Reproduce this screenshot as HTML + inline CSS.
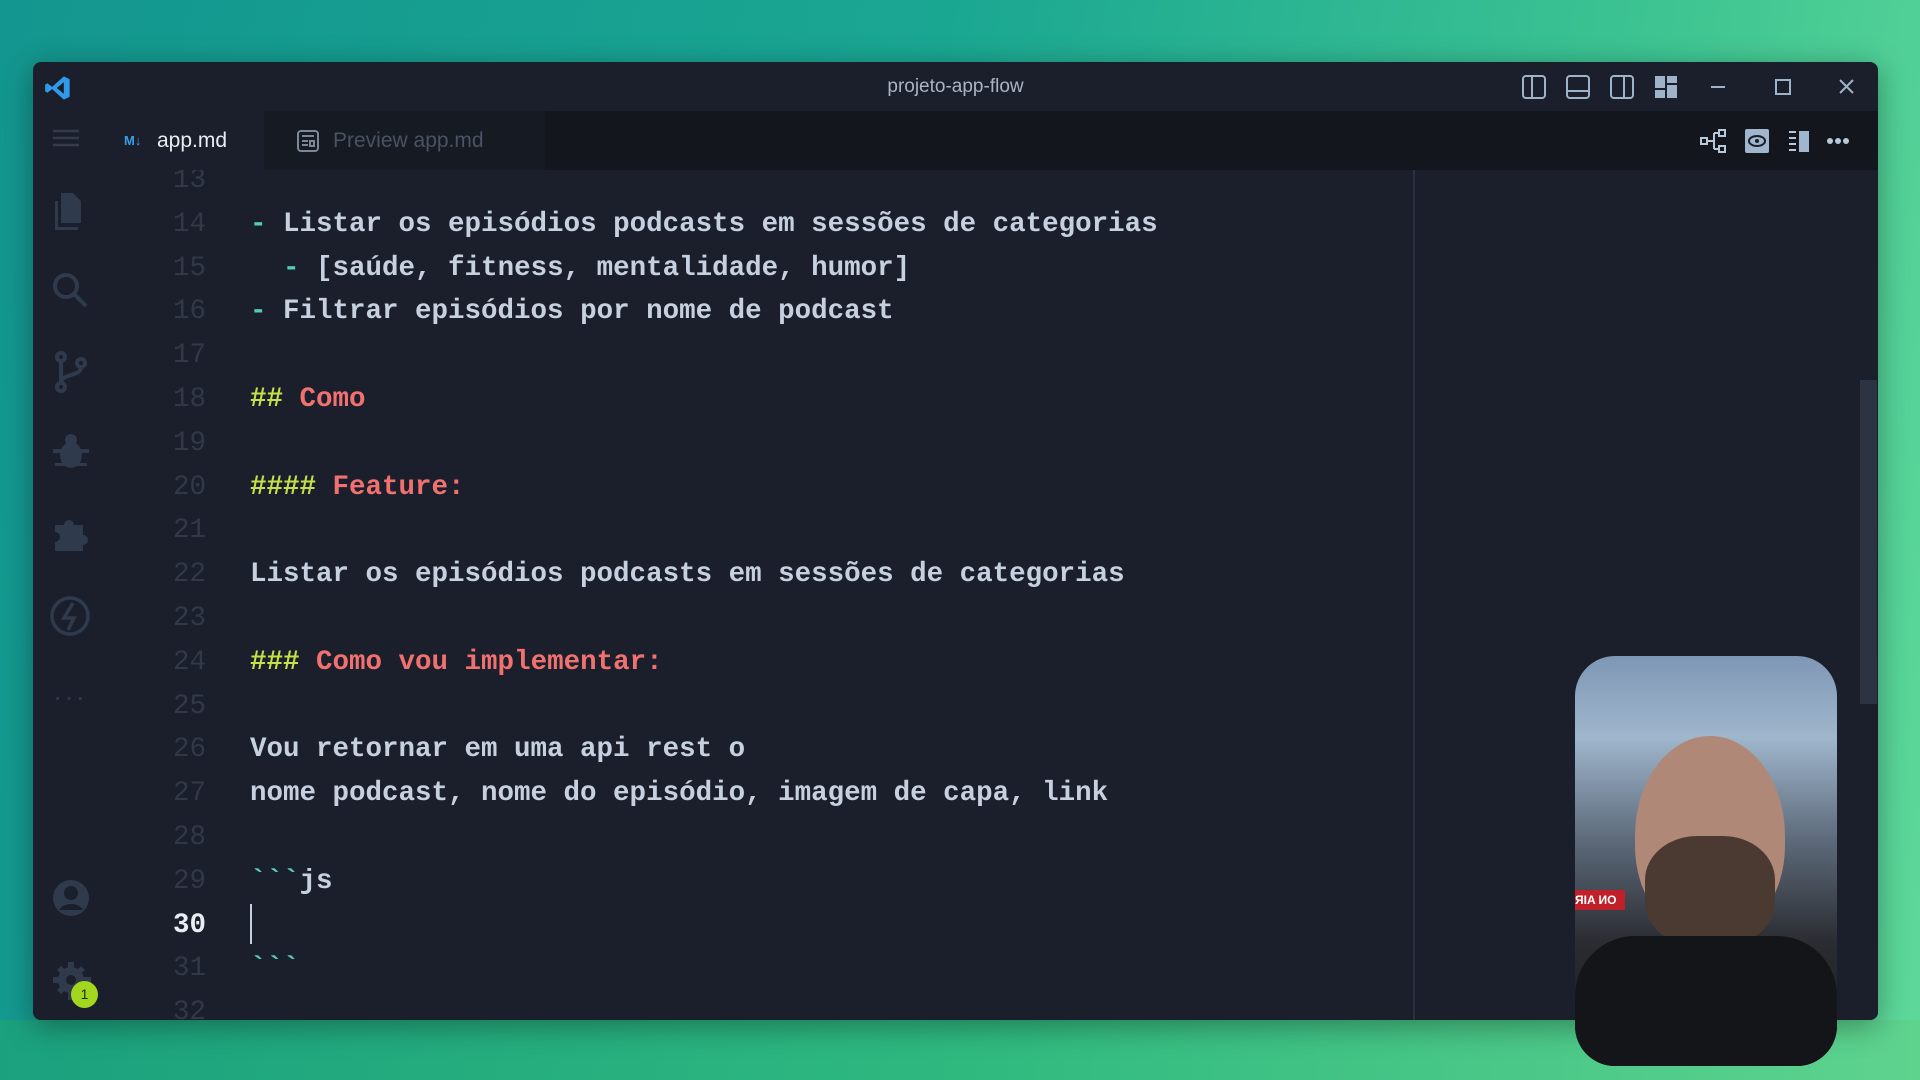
<!DOCTYPE html>
<html><head><meta charset="utf-8"><style>
*{margin:0;padding:0;box-sizing:border-box}
body{width:1920px;height:1080px;overflow:hidden;background:linear-gradient(100deg,#13968f 0%,#1aa792 45%,#3fc592 80%,#5fd99a 100%);font-family:"Liberation Sans",sans-serif;position:relative}
.bot{position:absolute;left:0;top:1020px;width:1920px;height:60px;background:linear-gradient(90deg,#1ba17e,#2fb97f 50%,#5ed38e)}
.win{position:absolute;left:33px;top:62px;width:1845px;height:958px;background:#1b1f2b;border-radius:8px;overflow:hidden;box-shadow:0 6px 30px rgba(0,0,0,.35)}
.title{position:absolute;left:0;top:0;width:100%;height:49px;color:#aab4c2;font-size:19px;text-align:center;line-height:49px}
.tabs{position:absolute;left:81px;top:49px;width:1764px;height:59px;background:#161a22}
.tab1{position:absolute;left:0;top:0;width:150px;height:59px;background:#1b1f2b}
.tabtxt{position:absolute;top:0;line-height:59px;font-size:21px}
.act{position:absolute;left:0;top:49px;width:81px;height:909px;background:#1b1f2b}
.ed{position:absolute;left:81px;top:108px;width:1764px;height:850px;overflow:hidden;background:#1b1f2b}
.code{position:absolute;left:0;top:-11px;font-family:"Liberation Mono",monospace;font-size:27.5px;font-weight:bold;line-height:43.8px;white-space:pre}
.ln{position:absolute;left:0;width:92px;text-align:right;color:#313846;font-weight:normal}
.tx{position:absolute;left:136px;color:#c6d0de}
.h{color:#c6e04a}.r{color:#f0716f}.d{color:#53cbb6}
svg{position:absolute}
.cam{position:absolute;left:1575px;top:656px;width:262px;height:410px;border-radius:40px;overflow:hidden;background:linear-gradient(180deg,#7e97b5 0%,#9fb6cc 20%,#5d6a7a 45%,#2a2c31 70%,#18191c 100%)}
</style></head><body>
<div class="bot"></div>
<div class="win">
 <div class="title">projeto-app-flow</div>
 <svg style="left:11px;top:12px" width="28" height="28" viewBox="0 0 24 24"><path d="M17 2l5 2.5v15L17 22 7 13l-4 3-2-1V9l2-1 4 3L17 2zm0 5l-6 5 6 5z" fill="#2f9be8"/></svg>
 <svg style="left:1488px;top:10px" width="340" height="30" viewBox="0 0 340 30" fill="none" stroke="#9fb3c8" stroke-width="2">
  <rect x="2" y="4" width="22" height="22" rx="3"/><line x1="11" y1="4" x2="11" y2="26"/>
  <rect x="46" y="4" width="22" height="22" rx="3"/><line x1="46" y1="19" x2="68" y2="19"/>
  <rect x="90" y="4" width="22" height="22" rx="3"/><line x1="103" y1="4" x2="103" y2="26"/>
  <g fill="#9fb3c8" stroke="none"><rect x="134" y="4" width="10" height="12"/><rect x="146" y="4" width="10" height="7"/><rect x="134" y="18" width="10" height="8"/><rect x="146" y="13" width="10" height="13"/></g>
  <line x1="190" y1="15" x2="204" y2="15"/><rect x="255" y="8" width="14" height="14"/>
  <path d="M319 8l13 13M332 8l-13 13"/>
 </svg>
 <div class="act">
  <svg style="left:18px;top:12px" width="30" height="30" viewBox="0 0 30 30" stroke="#343c4b" stroke-width="2.5"><path d="M2 8h26M2 15h26M2 22h26"/></svg>
  <svg style="left:20px;top:80px" width="30" height="40" viewBox="0 0 30 40" fill="#2f3a4c"><path d="M8 2h12l8 8v22H8z"/><path d="M2 10h3v26h20v3H2z"/></svg>
  <svg style="left:18px;top:160px" width="40" height="40" viewBox="0 0 40 40" fill="none" stroke="#2f3a4c" stroke-width="4"><circle cx="15" cy="15" r="11"/><path d="M23 23l12 12"/></svg>
  <svg style="left:20px;top:240px" width="36" height="42" viewBox="0 0 36 42" fill="none" stroke="#2f3a4c" stroke-width="4"><circle cx="8" cy="6" r="4"/><circle cx="8" cy="36" r="4"/><circle cx="28" cy="12" r="4"/><path d="M8 10v22M28 16c0 10-20 6-20 16"/></svg>
  <svg style="left:18px;top:320px" width="40" height="40" viewBox="0 0 40 40" fill="#2f3a4c"><ellipse cx="20" cy="24" rx="11" ry="13"/><circle cx="20" cy="9" r="6"/><path d="M2 18h36v4H2zM4 32h32v3H4z"/></svg>
  <svg style="left:18px;top:402px" width="40" height="40" viewBox="0 0 40 40" fill="#2f3a4c"><path d="M4 12h9a5 5 0 0110 0h9v10a5 5 0 010 10v6H4v-9a5 5 0 000-10z"/></svg>
  <svg style="left:16px;top:484px" width="42" height="42" viewBox="0 0 42 42" fill="none" stroke="#2f3a4c" stroke-width="3.5"><circle cx="21" cy="21" r="18"/><path d="M24 8l-9 15h10l-6 12" /></svg>
  <div style="position:absolute;left:20px;top:570px;color:#2f3a4c;font-size:28px;letter-spacing:2px">···</div>
  <svg style="left:18px;top:767px" width="40" height="40" viewBox="0 0 40 40" fill="#2f3a4c"><circle cx="20" cy="20" r="18"/><circle cx="20" cy="15" r="7" fill="#1b1f2b"/><path d="M8 32c4-8 20-8 24 0" fill="#1b1f2b"/></svg>
  <svg style="left:18px;top:849px" width="40" height="40" viewBox="0 0 40 40" fill="#2f3a4c"><circle cx="20" cy="20" r="13"/><path d="M17 2h6v38h-6zM2 17h38v6H2z"/><path d="M6 10l4-4 24 24-4 4zM30 6l4 4-24 24-4-4z"/><circle cx="20" cy="20" r="5" fill="#1b1f2b"/></svg>
  <div style="position:absolute;left:38px;top:870px;width:27px;height:27px;border-radius:50%;background:#a3d61e;color:#1b2b10;font-size:14px;text-align:center;line-height:27px">1</div>
 </div>
 <div class="tabs">
  <div class="tab1"></div>
  <div class="tabtxt" style="left:10px;color:#3b9ee8;font-size:13px;font-weight:bold">M↓</div>
  <div class="tabtxt" style="left:43px;color:#e8edf3">app.md</div>
  <svg style="left:183px;top:19px" width="22" height="22" viewBox="0 0 22 22" fill="none" stroke="#7c8797" stroke-width="2"><rect x="1" y="1" width="20" height="20" rx="3"/><path d="M5 6h12M5 11h6M5 15h6M13 11h4v5h-4z"/></svg>
  <div class="tabtxt" style="left:219px;color:#4a5363">Preview app.md</div>
  <div style="position:absolute;left:431px;top:0;width:1333px;height:59px;background:#13161d"></div>
  <svg style="left:1586px;top:16px" width="150" height="28" viewBox="0 0 150 28" fill="none" stroke="#b8c8d8" stroke-width="2">
   <rect x="1" y="11" width="6" height="6"/><rect x="19" y="3" width="6" height="6"/><rect x="19" y="19" width="6" height="6"/><path d="M7 14h7M14 6v16M14 6h5M14 22h5"/>
   <rect x="45" y="2" width="24" height="24" rx="2" fill="#9fb6cc" stroke="none"/><ellipse cx="57" cy="14" rx="8" ry="5" stroke="#1b1f2b"/><circle cx="57" cy="14" r="2" fill="#1b1f2b" stroke="none"/>
   <path d="M89 5h7M89 11h7M89 17h7M89 23h7" /><rect x="99" y="4" width="10" height="21" fill="#9fb6cc" stroke="none"/>
   <g fill="#b8c8d8" stroke="none"><circle cx="130" cy="14" r="3"/><circle cx="138" cy="14" r="3"/><circle cx="146" cy="14" r="3"/></g>
  </svg>
 </div>
 <div class="ed">
  <div class="code">
<div class="ln" style="top:0">13</div>
<div class="ln" style="top:43.8px">14</div><div class="tx" style="top:43.8px"><span class="d">-</span> Listar os episódios podcasts em sessões de categorias</div>
<div class="ln" style="top:87.6px">15</div><div class="tx" style="top:87.6px">  <span class="d">-</span> [saúde, fitness, mentalidade, humor]</div>
<div class="ln" style="top:131.4px">16</div><div class="tx" style="top:131.4px"><span class="d">-</span> Filtrar episódios por nome de podcast</div>
<div class="ln" style="top:175.2px">17</div>
<div class="ln" style="top:219px">18</div><div class="tx" style="top:219px"><span class="h">##</span> <span class="r">Como</span></div>
<div class="ln" style="top:262.8px">19</div>
<div class="ln" style="top:306.6px">20</div><div class="tx" style="top:306.6px"><span class="h">####</span> <span class="r">Feature:</span></div>
<div class="ln" style="top:350.4px">21</div>
<div class="ln" style="top:394.2px">22</div><div class="tx" style="top:394.2px">Listar os episódios podcasts em sessões de categorias</div>
<div class="ln" style="top:438px">23</div>
<div class="ln" style="top:481.8px">24</div><div class="tx" style="top:481.8px"><span class="h">###</span> <span class="r">Como vou implementar:</span></div>
<div class="ln" style="top:525.6px">25</div>
<div class="ln" style="top:569.4px">26</div><div class="tx" style="top:569.4px">Vou retornar em uma api rest o</div>
<div class="ln" style="top:613.2px">27</div><div class="tx" style="top:613.2px">nome podcast, nome do episódio, imagem de capa, link</div>
<div class="ln" style="top:657px">28</div>
<div class="ln" style="top:700.8px">29</div><div class="tx" style="top:700.8px"><span class="d">&#96;&#96;&#96;</span>js</div>
<div class="ln" style="top:744.6px;color:#e8edf3;font-weight:bold">30</div><div class="tx" style="top:744.6px"><span style="display:inline-block;width:2px;height:40px;background:#c6d0de;vertical-align:middle"></span></div>
<div class="ln" style="top:788.4px">31</div><div class="tx" style="top:788.4px"><span class="d">&#96;&#96;&#96;</span></div>
<div class="ln" style="top:832.2px">32</div>
  </div>
  <div style="position:absolute;left:1299px;top:0;width:2px;height:850px;background:#2a303d"></div>
  <div style="position:absolute;left:1746px;top:210px;width:17px;height:324px;background:#2c3342"></div>
 </div>
</div>
<div class="cam">
 <div style="position:absolute;left:60px;top:80px;width:150px;height:200px;border-radius:50% 50% 45% 45%;background:#b08878"></div>
 <div style="position:absolute;left:70px;top:180px;width:130px;height:110px;border-radius:40%;background:#4a3a32"></div>
 <div style="position:absolute;left:0;top:280px;width:262px;height:130px;background:#141518;border-radius:60px 60px 0 0"></div>
 <div style="position:absolute;left:0;top:234px;width:50px;height:20px;background:#c0202a;color:#fff;font-size:12px;font-weight:bold;line-height:20px">ЯIA ИО</div>
</div>
</body></html>
